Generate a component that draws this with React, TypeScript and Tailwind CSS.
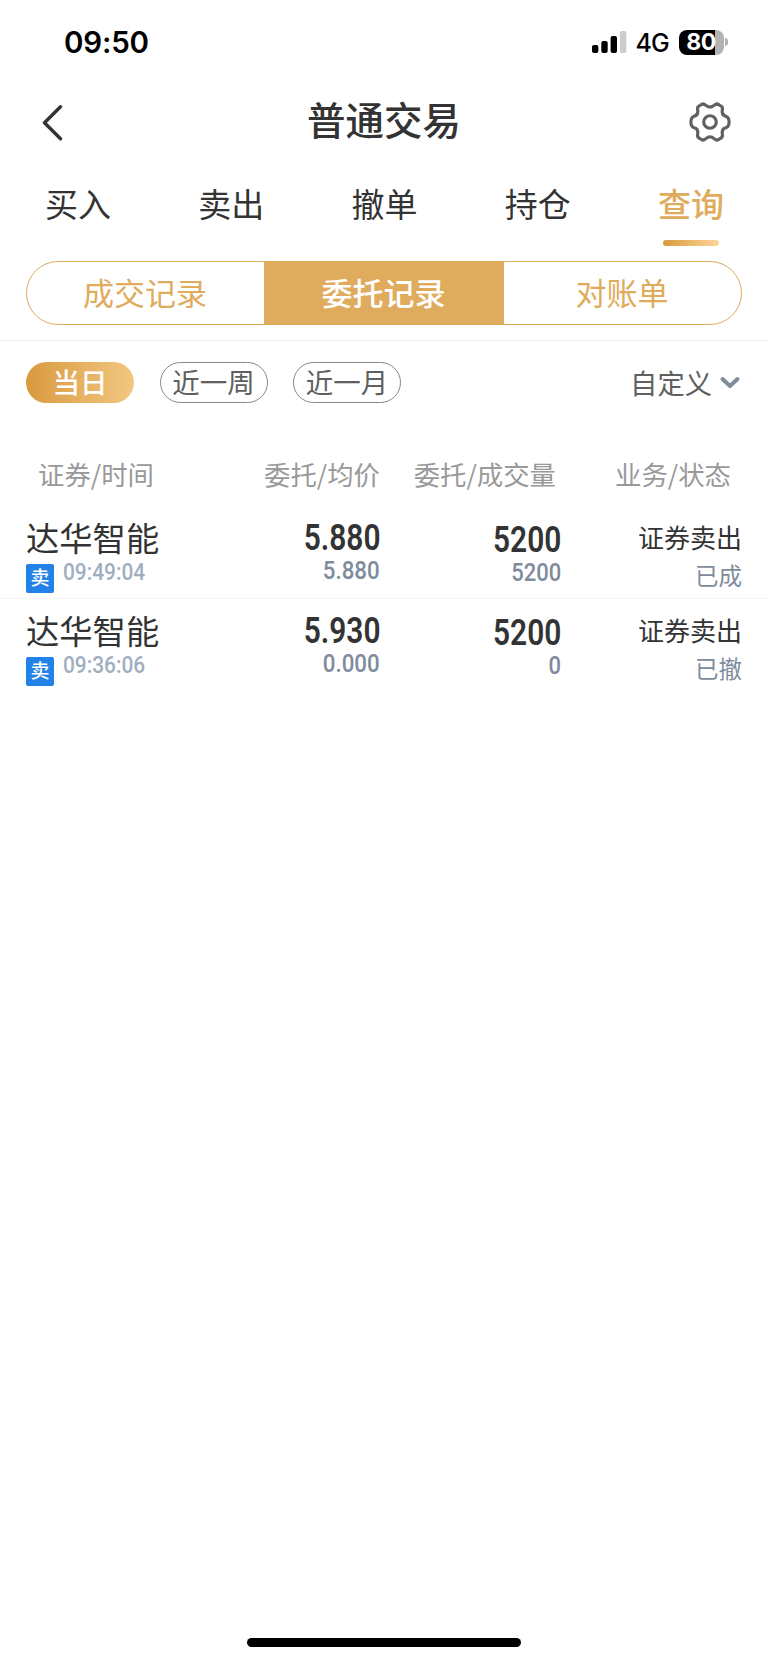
import clsx from "clsx";

const TABS = ["买入", "卖出", "撤单", "持仓", "查询"];
const SEGMENTS = ["成交记录", "委托记录", "对账单"];
const RANGES = ["当日", "近一周", "近一月"];

type Order = {
  name: string;
  time: string;
  price: string;
  avgPrice: string;
  volume: string;
  filled: string;
  type: string;
  status: string;
};

const ORDERS: Order[] = [
  {
    name: "达华智能",
    time: "09:49:04",
    price: "5.880",
    avgPrice: "5.880",
    volume: "5200",
    filled: "5200",
    type: "证券卖出",
    status: "已成",
  },
  {
    name: "达华智能",
    time: "09:36:06",
    price: "5.930",
    avgPrice: "0.000",
    volume: "5200",
    filled: "0",
    type: "证券卖出",
    status: "已撤",
  },
];

function StatusBar() {
  return (
    <div className="flex h-[84px] items-center justify-between pr-[40px] pl-[64px] font-['Inter',sans-serif] text-black">
      <span className="pt-px text-[29.5px] leading-none font-semibold tracking-[-0.2px]">09:50</span>
      <div className="flex items-center">
        <svg width="35" height="22" viewBox="0 0 35 22">
          <rect x="0" y="14" width="6.4" height="8" rx="2" />
          <rect x="9.3" y="10" width="6.4" height="12" rx="2" />
          <rect x="18.6" y="5" width="6.4" height="17" rx="2" />
          <rect x="27.9" y="0" width="6.4" height="22" rx="2" fill="#cccccc" />
        </svg>
        <span className="ml-[9px] w-[34px] pt-[2px] text-[25px] leading-none font-medium tracking-[-0.8px]">4G</span>
        <div className="ml-[9px] flex h-[25px] w-[45px] items-center justify-center rounded-[8px] bg-linear-to-r from-black from-80% to-[#b3b3b3] to-80% text-[23px] leading-none font-bold tracking-[-0.5px] text-white">
          80
        </div>
        <div className="ml-[1.5px] h-[8px] w-[3px] rounded-r-full bg-[#b3b3b3]" />
      </div>
    </div>
  );
}

function NavBar() {
  return (
    <div className="grid h-[76px] grid-cols-[1fr_auto_1fr] items-center pr-[37px] pl-[42px]">
      <svg className="mt-[2px]" width="21" height="36" viewBox="0 0 21 36" fill="none" stroke="#333" strokeWidth="3.4" strokeLinecap="round" strokeLinejoin="round">
        <path d="M18.5 1.8 L2.5 17.8 L18.5 33.8" />
      </svg>
      <h1 className="pr-[5px] pb-[8px] text-[38.5px] leading-none font-medium text-[#333]">普通交易</h1>
      <svg className="justify-self-end" width="42" height="40" viewBox="0 0 42 40" fill="none" stroke="#606060" strokeWidth="3.1" strokeLinejoin="round">
        <path d="M11.2 3.4 Q14 .7 16.6 3.2 Q21 7 25.4 3.2 Q28 .7 30.8 3.4 Q34.4 4.6 33.2 8.6 Q32.8 13.4 36.8 14.2 Q40.1 15.4 40.1 20 Q40.1 24.6 36.8 25.8 Q32.8 26.6 33.2 31.4 Q34.4 35.4 30.8 36.6 Q28 39.3 25.4 36.8 Q21 33 16.6 36.8 Q14 39.3 11.2 36.6 Q7.6 35.4 8.8 31.4 Q9.2 26.6 5.2 25.8 Q1.9 24.6 1.9 20 Q1.9 15.4 5.2 14.2 Q9.2 13.4 8.8 8.6 Q7.6 4.6 11.2 3.4 Z" />
        <circle cx="21" cy="20" r="6.3" />
      </svg>
    </div>
  );
}

function TabBar() {
  return (
    <div className="flex h-[101px] items-start justify-between pt-[27px] pr-[44px] pl-[45px]">
      {TABS.map((tab) => {
        const active = tab === "查询";
        return (
          <div key={tab} className="flex w-[66px] flex-col items-center">
            <span
              className={clsx(
                "text-[33px] leading-[33px] whitespace-nowrap",
                active ? "font-medium text-[#dfab5d]" : "text-[#333]",
              )}
            >
              {tab}
            </span>
            {active && <div className="mt-[20px] h-[6px] w-[56px] rounded-full bg-linear-to-r from-[#d99a3d] to-[#fdd799]" />}
          </div>
        );
      })}
    </div>
  );
}

function SegmentControl() {
  return (
    <div className="h-[80px] border-b border-[#f0f0f0] px-[26px]">
      <div className="grid h-[64px] grid-cols-[1fr_240px_1fr] overflow-hidden rounded-full border border-[#dfab5d]">
        {SEGMENTS.map((item) => (
          <div
            key={item}
            className={clsx(
              "flex items-center justify-center pr-px pb-[4px] text-[31px] leading-none",
              item === "委托记录" ? "bg-[#dfab5d] font-medium text-white" : "text-[#dfab5d]",
            )}
          >
            {item}
          </div>
        ))}
      </div>
    </div>
  );
}

function RangeFilter() {
  return (
    <div className="flex h-[84px] items-center justify-between px-[26px] pb-[2px]">
      <div className="flex gap-[25.5px]">
        {RANGES.map((item) => (
          <div
            key={item}
            className={clsx(
              "flex h-[41px] w-[108px] items-center justify-center rounded-full text-[27.5px] leading-none whitespace-nowrap",
              item === "当日"
                ? "bg-linear-to-r from-[#d99a3d] to-[#f2c781] font-medium text-white"
                : "border border-[#888] text-[#606060]",
            )}
          >
            {item}
          </div>
        ))}
      </div>
      <div className="flex items-center gap-[8px] pt-[2px] pr-[2px] text-[27.3px] leading-none text-[#606060]">
        自定义
        <svg width="20" height="13" viewBox="0 0 20 13" fill="none" stroke="#7e8c9d" strokeWidth="4" strokeLinecap="round" strokeLinejoin="round">
          <path d="M2.5 3 L10 10 L17.5 3" />
        </svg>
      </div>
    </div>
  );
}

function ListHeader() {
  return (
    <div className="flex h-[81px] pt-[36px] text-[26.4px] leading-[26px] text-[#999]">
      <span className="w-[226px] pl-[38px]">证券/时间</span>
      <span className="w-[154px] text-right">委托/均价</span>
      <span className="w-[176px] text-right">委托/成交量</span>
      <span className="w-[175px] text-right">业务/状态</span>
    </div>
  );
}

function OrderRow({ order }: { order: Order }) {
  return (
    <div className="flex h-[93px] px-[26px] font-['Roboto','Noto_Sans_CJK_SC',sans-serif]">
      <div className="w-[194px] pt-[17px]">
        <div className="text-[33.3px] leading-[34px] text-[#333]">{order.name}</div>
        <div className="flex">
          <span className="mt-[7px] flex h-[29px] w-[28px] items-center justify-center rounded-[2px] bg-[#2382e7] text-[19px] leading-none font-medium text-white">
            卖
          </span>
          <span className="mt-[3px] ml-[9px] origin-left scale-x-[.87] text-[24px] leading-[24px] font-medium text-[#9fafc0]">{order.time}</span>
        </div>
      </div>
      <div className="flex w-[160px] flex-col items-end pt-[14px]">
        <span className="origin-right scale-x-[.83] text-[36px] leading-[36px] font-semibold text-[#333]">{order.price}</span>
        <span className="origin-right scale-x-[.84] text-[26.5px] leading-[28px] font-medium text-[#7e8c9d]">{order.avgPrice}</span>
      </div>
      <div className="flex w-[181px] flex-col items-end pt-[16px]">
        <span className="origin-right scale-x-[.83] text-[36px] leading-[36px] font-semibold text-[#333]">{order.volume}</span>
        <span className="origin-right scale-x-[.83] text-[26.5px] leading-[28px] font-medium text-[#7e8c9d]">{order.filled}</span>
      </div>
      <div className="flex flex-1 flex-col items-end pt-[20px]">
        <span className="text-[26px] leading-[26px] text-[#333]">{order.type}</span>
        <span className="mt-[13px] text-[23.5px] leading-[24px] text-[#7e8c9d]">{order.status}</span>
      </div>
    </div>
  );
}

export default function App() {
  return (
    <div className="flex h-[1663px] w-[768px] flex-col overflow-hidden bg-white font-['Noto_Sans_CJK_SC',sans-serif]">
      <StatusBar />
      <NavBar />
      <TabBar />
      <SegmentControl />
      <RangeFilter />
      <ListHeader />
      <div className="flex-1 divide-y divide-[#f5f5f5]">
        {ORDERS.map((order) => (
          <OrderRow key={order.time} order={order} />
        ))}
      </div>
      <div className="mb-[16px] h-[9px] w-[274px] self-center rounded-full bg-black" />
    </div>
  );
}
